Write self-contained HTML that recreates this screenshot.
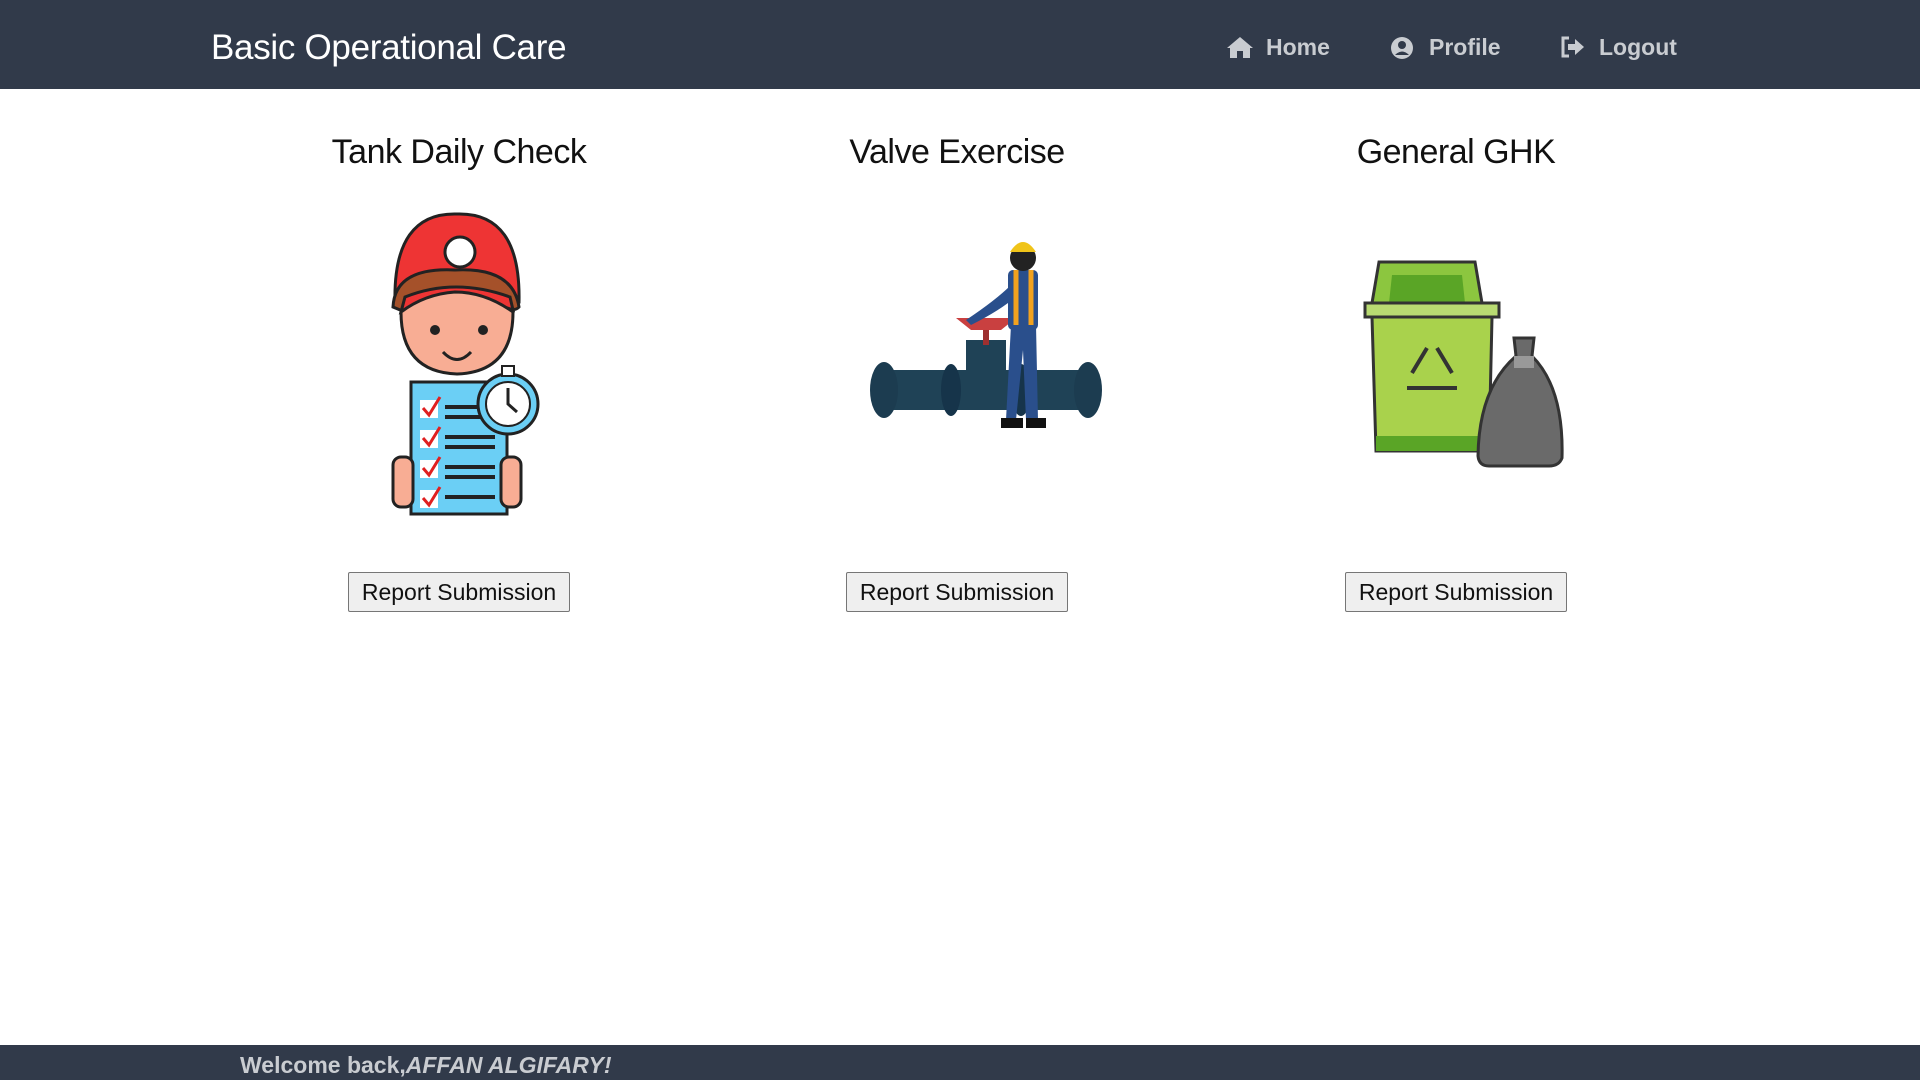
<!DOCTYPE html>
<html><head><meta charset="utf-8"><style>
*{margin:0;padding:0;box-sizing:border-box}
body{width:1920px;height:1080px;background:#fff;font-family:"Liberation Sans",sans-serif;position:relative;overflow:hidden}
.hdr{position:absolute;left:0;top:0;width:1920px;height:89px;background:#313a4a}
.title{position:absolute;left:211px;top:28px;font-size:35px;color:#fff;letter-spacing:-0.3px}
.nav{position:absolute;top:34px;font-size:23px;font-weight:bold;color:#c9ccd1}
.nav svg{position:absolute;left:-40px;top:1px}
h2{position:absolute;font-weight:normal;font-size:34px;color:#111;transform:translateX(-50%);top:133px;white-space:nowrap;letter-spacing:-0.5px}
.btn{position:absolute;top:572px;width:222px;height:40px;border:1px solid #767676;background:#efefef;border-radius:2px;font-size:23px;text-align:center;line-height:38px;color:#111;transform:translateX(-50%)}
.ftr{position:absolute;left:0;top:1045px;width:1920px;height:35px;background:#313a4a;color:#c9ccd1;font-size:23px;font-weight:bold;padding-left:240px;line-height:40px}
</style></head><body>
<div class="hdr">
<div class="title">Basic Operational Care</div>
<div class="nav" style="left:1266px"><svg width="28" height="24" viewBox="0 0 28 24"><path d="M14 2 L1 13 L4 13 L4 23 L11 23 L11 16 L17 16 L17 23 L24 23 L24 13 L27 13 Z" fill="#c9ccd1"/></svg>Home</div>
<div class="nav" style="left:1429px"><svg width="26" height="26" viewBox="0 0 26 26"><circle cx="13" cy="13" r="11" fill="#c9ccd1"/><circle cx="13" cy="10" r="4" fill="#313a4a"/><path d="M6 20 Q13 13 20 20" fill="#313a4a"/></svg>Profile</div>
<div class="nav" style="left:1599px"><svg width="28" height="24" viewBox="0 0 28 24"><path d="M10 3 H4 V21 H10" stroke="#c9ccd1" stroke-width="3" fill="none"/><path d="M9 9 H16 V4 L25 12 L16 20 V15 H9 Z" fill="#c9ccd1"/></svg>Logout</div>
</div>

<h2 style="left:459px">Tank Daily Check</h2>
<h2 style="left:957px">Valve Exercise</h2>
<h2 style="left:1456px">General GHK</h2>

<svg style="position:absolute;left:385px;top:212px" width="160" height="305" viewBox="0 0 160 305">
<path d="M10 90 Q8 0 72 2 Q136 0 134 90 Z" fill="#ee3434" stroke="#222" stroke-width="3"/>
<circle cx="75" cy="40" r="15" fill="#fff" stroke="#222" stroke-width="3"/>
<path d="M8 95 Q10 55 70 58 Q128 55 134 95 Q130 100 120 95 Q72 75 20 100 Z" fill="#a5512a" stroke="#222" stroke-width="3"/>
<path d="M20 85 Q70 65 125 85 L128 98 Q70 76 16 100 Z" fill="#ee3434" stroke="#222" stroke-width="3"/>
<path d="M16 100 Q16 160 72 162 Q128 160 128 100 Q100 80 70 80 Q40 82 16 100 Z" fill="#f8ad94" stroke="#222" stroke-width="3"/>
<circle cx="50" cy="118" r="5" fill="#222"/><circle cx="98" cy="118" r="5" fill="#222"/>
<path d="M58 140 Q72 155 86 140" stroke="#222" stroke-width="3" fill="none"/>
<rect x="26" y="170" width="96" height="132" fill="#6bcff5" stroke="#222" stroke-width="3"/>
<g stroke="#222" stroke-width="4"><line x1="60" y1="195" x2="110" y2="195"/><line x1="60" y1="205" x2="110" y2="205"/><line x1="60" y1="225" x2="110" y2="225"/><line x1="60" y1="235" x2="110" y2="235"/><line x1="60" y1="255" x2="110" y2="255"/><line x1="60" y1="265" x2="110" y2="265"/><line x1="60" y1="285" x2="110" y2="285"/></g>
<g fill="#fff"><rect x="35" y="188" width="18" height="18"/><rect x="35" y="218" width="18" height="18"/><rect x="35" y="248" width="18" height="18"/><rect x="35" y="278" width="18" height="18"/></g>
<g stroke="#e02020" stroke-width="3" fill="none"><path d="M38 196 L44 203 L55 185"/><path d="M38 226 L44 233 L55 215"/><path d="M38 256 L44 263 L55 245"/><path d="M38 286 L44 293 L55 275"/></g>
<circle cx="123" cy="192" r="30" fill="#6bcff5" stroke="#222" stroke-width="3"/><circle cx="123" cy="192" r="22" fill="#fff" stroke="#222" stroke-width="2"/>
<path d="M123 176 V192 L132 200" stroke="#222" stroke-width="3" fill="none"/>
<rect x="117" y="154" width="12" height="10" fill="#fff" stroke="#222" stroke-width="2"/>
<rect x="8" y="245" width="20" height="50" rx="8" fill="#f8ad94" stroke="#222" stroke-width="3"/>
<rect x="116" y="245" width="20" height="50" rx="8" fill="#f8ad94" stroke="#222" stroke-width="3"/>
</svg>

<svg style="position:absolute;left:866px;top:230px" width="240" height="205" viewBox="0 0 240 205">
<rect x="10" y="140" width="220" height="40" fill="#1f4256"/>
<ellipse cx="18" cy="160" rx="14" ry="28" fill="#1c3c50"/><ellipse cx="222" cy="160" rx="14" ry="28" fill="#1c3c50"/>
<ellipse cx="85" cy="160" rx="10" ry="26" fill="#16344a"/><ellipse cx="155" cy="160" rx="10" ry="26" fill="#16344a"/>
<rect x="100" y="110" width="40" height="50" fill="#1f4256"/>
<rect x="117" y="95" width="6" height="20" fill="#9e3030"/>
<path d="M90 88 L150 88 L135 100 L105 100 Z" fill="#c94040"/>
<path d="M145 55 Q130 70 100 90 L105 95 Q135 80 152 65 Z" fill="#2a4f8c"/>
<rect x="142" y="40" width="30" height="60" rx="5" fill="#2a4f8c"/>
<path d="M150 40 L150 100 M165 40 L165 100" stroke="#f2a21e" stroke-width="5"/>
<path d="M145 95 L140 190 L150 190 L157 120 L160 190 L172 190 L170 95 Z" fill="#2a4f8c"/>
<circle cx="157" cy="28" r="13" fill="#222"/><path d="M144 22 Q157 2 170 22 Z" fill="#f0c419"/>
<rect x="135" y="188" width="22" height="10" fill="#111"/><rect x="160" y="188" width="20" height="10" fill="#111"/>
</svg>

<svg style="position:absolute;left:1362px;top:258px" width="220" height="212" viewBox="0 0 220 212">
<path d="M17 4 L113 4 L120 45 L10 45 Z" fill="#8cc63f" stroke="#333" stroke-width="3"/>
<path d="M30 17 L100 17 L103 45 L27 45 Z" fill="#5aa526"/>
<rect x="3" y="45" width="134" height="14" fill="#b9db72" stroke="#333" stroke-width="3"/>
<path d="M10 59 L130 59 L127 193 L14 193 Z" fill="#a9d24c" stroke="#333" stroke-width="3"/>
<rect x="14" y="178" width="113" height="15" fill="#5aa526"/>
<g stroke="#333" stroke-width="4" fill="none"><path d="M65 90 L50 115"/><path d="M75 90 L90 115"/><path d="M45 130 L95 130"/></g>
<path d="M152 80 L172 80 L170 98 Q202 130 200 200 Q197 208 187 208 L127 208 Q117 208 116 198 Q117 130 154 98 Z" fill="#6a6a6a" stroke="#333" stroke-width="3"/>
<rect x="152" y="98" width="20" height="12" fill="#999"/>
</svg>

<div class="btn" style="left:459px">Report Submission</div>
<div class="btn" style="left:957px">Report Submission</div>
<div class="btn" style="left:1456px">Report Submission</div>

<div class="ftr">Welcome back,<i>AFFAN ALGIFARY!</i></div>
</body></html>
